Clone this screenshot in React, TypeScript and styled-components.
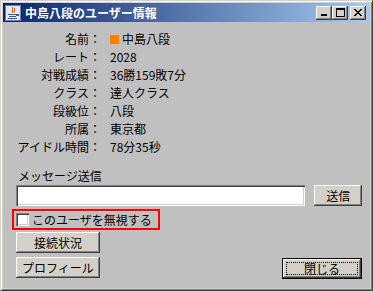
import React from "react";
import styled, { createGlobalStyle } from "styled-components";

const GlobalStyle = createGlobalStyle`
  html, body { margin: 0; padding: 0; background: #d4d0c8; }
  body { font-family: "Noto Sans CJK JP", "Noto Sans", sans-serif; font-size: 12px; }
  * { box-sizing: border-box; }
`;

const Window = styled.div`
  width: 373px;
  height: 291px;
  background: #d4d0c8;
  border-top: 1px solid #d4d0c8;
  border-left: 1px solid #d4d0c8;
  border-right: 1px solid #404040;
  border-bottom: 1px solid #404040;
  box-shadow: inset 1px 1px #ffffff, inset -1px -1px #808080;
  padding: 2px;
  display: flex;
  flex-direction: column;
`;

const TitleBar = styled.div`
  height: 19px;
  flex: none;
  background: linear-gradient(to right, #0a246a, #a6caf0);
  display: flex;
  align-items: center;
  padding: 0 4px 0 2px;
  gap: 4px;
`;

const TitleText = styled.span`
  flex: 1;
  color: #ffffff;
  font-weight: bold;
  font-size: 12px;
  line-height: 18px;
  white-space: nowrap;
`;

const CaptionButtons = styled.div`
  display: flex;
  align-items: center;
`;

const CaptionButton = styled.div<{ $gap?: number }>`
  width: 16px;
  height: 14px;
  margin-left: ${(p) => p.$gap ?? 0}px;
  background: #d4d0c8;
  box-shadow: inset -1px -1px #404040, inset 1px 1px #ffffff, inset -2px -2px #808080;
  display: flex;
  align-items: center;
  justify-content: center;
  svg { display: block; }
`;

const Content = styled.div`
  flex: 1;
  background: #c0c0c0;
  padding: 8px 8px 0 9px;
  display: flex;
  flex-direction: column;
  color: #000;
`;

const InfoGrid = styled.div`
  display: grid;
  grid-template-columns: 89px auto;
  column-gap: 9px;
  grid-auto-rows: 18px;
  align-items: center;
`;

const Label = styled.div`
  text-align: right;
  white-space: nowrap;
  line-height: 18px;
`;

const Value = styled.div`
  display: flex;
  align-items: center;
  gap: 3px;
  line-height: 18px;
  white-space: nowrap;
`;

const Swatch = styled.span<{ $color: string }>`
  width: 9px;
  height: 9px;
  background: ${(p) => p.$color};
  display: inline-block;
`;

const SectionLabel = styled.div`
  margin: 11px 0 0 6px;
  line-height: 18px;
`;

const SendRow = styled.div`
  display: flex;
  align-items: center;
  margin: 0 0 0 4px;
  gap: 9px;
`;

const TextField = styled.div`
  width: 291px;
  height: 21px;
  background: #ffffff;
  box-shadow: inset 1px 1px #808080, inset 2px 2px #404040, inset -1px -1px #ffffff, inset -2px -2px #d4d0c8;
`;

const Button = styled.button<{ $w: number; $default?: boolean; $lift?: number }>`
  width: ${(p) => p.$w}px;
  height: 21px;
  padding: 0;
  margin: 0 0 ${(p) => p.$lift ?? 0}px 0;
  border: ${(p) => (p.$default ? "1px solid #000" : "none")};
  background: #d4d0c8;
  font-family: inherit;
  font-size: 12px;
  color: #000;
  position: relative;
  box-shadow: inset -1px -1px #404040, inset 1px 1px #ffffff, inset -2px -2px #808080, inset 2px 2px #d4d0c8;
`;

const FocusRing = styled.span`
  position: absolute;
  left: 3px;
  top: 3px;
  right: 3px;
  bottom: 3px;
  border: 1px dotted #000;
  pointer-events: none;
`;

const CheckRow = styled.div`
  margin: 3px 0 0 0;
  width: 148px;
  height: 21px;
  border: 2px solid #ff0000;
  display: flex;
  align-items: center;
  gap: 3px;
  padding-left: 2px;
  white-space: nowrap;
`;

const CheckBox = styled.span`
  width: 13px;
  height: 13px;
  background: #ffffff;
  box-shadow: inset 1px 1px #808080, inset 2px 2px #404040, inset -1px -1px #ffffff, inset -2px -2px #d4d0c8;
  flex: none;
`;

const ButtonColumn = styled.div`
  margin: 2px 0 0 4px;
  display: flex;
  flex-direction: column;
  gap: 4px;
`;

const BottomRow = styled.div`
  display: flex;
  align-items: flex-end;
  justify-content: space-between;
`;

const rows: [string, React.ReactNode][] = [
  ["名前：", <><Swatch $color="#ff8000" />中島八段</>],
  ["レート：", "2028"],
  ["対戦成績：", "36勝159敗7分"],
  ["クラス：", "達人クラス"],
  ["段級位：", "八段"],
  ["所属：", "東京都"],
  ["アイドル時間：", "78分35秒"],
];

const JavaIcon = () => (
  <svg width="16" height="16" viewBox="0 0 16 16" shapeRendering="crispEdges">
    <rect x="0.5" y="0.5" width="15" height="15" fill="#e8e8e8" stroke="#6a7fa8" />
    <path d="M8 2 C6 4 10 5 7 8 M10 3 C9 5 11 5 9 7" stroke="#e07020" strokeWidth="1.2" fill="none" />
    <path d="M3 9 H12 M4 11 H11 M3 13 H12" stroke="#3060a0" strokeWidth="1" />
    <path d="M12 9 C14 9 14 11 11 11" stroke="#3060a0" fill="none" />
  </svg>
);

export default function App() {
  return (
    <>
      <GlobalStyle />
      <Window>
        <TitleBar>
          <JavaIcon />
          <TitleText>中島八段のユーザー情報</TitleText>
          <CaptionButtons>
            <CaptionButton>
              <svg width="8" height="7" viewBox="0 0 8 7" shapeRendering="crispEdges">
                <rect x="1" y="5" width="6" height="2" fill="#000" />
              </svg>
            </CaptionButton>
            <CaptionButton>
              <svg width="9" height="9" viewBox="0 0 9 9" shapeRendering="crispEdges">
                <rect x="0.5" y="0.5" width="8" height="8" fill="none" stroke="#000" />
                <rect x="0" y="1" width="9" height="1" fill="#000" />
              </svg>
            </CaptionButton>
            <CaptionButton $gap={2}>
              <svg width="8" height="7" viewBox="0 0 8 7" shapeRendering="crispEdges">
                <path d="M0 0h2v1h-2z M6 0h2v1h-2z M1 1h2v1h-2z M5 1h2v1h-2z M2 2h4v1h-4z M3 3h2v1h-2z M2 4h4v1h-4z M1 5h2v1h-2z M5 5h2v1h-2z M0 6h2v1h-2z M6 6h2v1h-2z" fill="#000" />
              </svg>
            </CaptionButton>
          </CaptionButtons>
        </TitleBar>
        <Content>
          <InfoGrid>
            {rows.map(([l, v]) => (
              <React.Fragment key={l}>
                <Label>{l}</Label>
                <Value>{v}</Value>
              </React.Fragment>
            ))}
          </InfoGrid>
          <SectionLabel>メッセージ送信</SectionLabel>
          <SendRow>
            <TextField />
            <Button $w={48}>送信</Button>
          </SendRow>
          <CheckRow>
            <CheckBox />
            このユーザを無視する
          </CheckRow>
          <ButtonColumn>
            <Button $w={84}>接続状況</Button>
            <BottomRow>
              <Button $w={84} $lift={1}>プロフィール</Button>
              <Button $w={80} $default>
                <FocusRing />
                閉じる
              </Button>
            </BottomRow>
          </ButtonColumn>
        </Content>
      </Window>
    </>
  );
}
